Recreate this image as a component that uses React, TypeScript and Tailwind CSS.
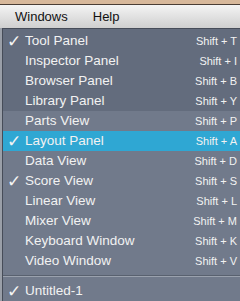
import React from "react";

const items: { label: string; key: string; checked?: boolean; active?: boolean }[] = [
  { label: "Tool Panel", key: "Shift + T", checked: true },
  { label: "Inspector Panel", key: "Shift + I" },
  { label: "Browser Panel", key: "Shift + B" },
  { label: "Library Panel", key: "Shift + Y" },
  { label: "Parts View", key: "Shift + P" },
  { label: "Layout Panel", key: "Shift + A", checked: true, active: true },
  { label: "Data View", key: "Shift + D" },
  { label: "Score View", key: "Shift + S", checked: true },
  { label: "Linear View", key: "Shift + L" },
  { label: "Mixer View", key: "Shift + M" },
  { label: "Keyboard Window", key: "Shift + K" },
  { label: "Video Window", key: "Shift + V" },
];

function Row({ label, shortcut, checked, active }: { label: string; shortcut?: string; checked?: boolean; active?: boolean }) {
  return (
    <div className={`h-[20px] flex items-center pr-[3px] ${active ? "bg-[#2fa7d3]" : ""}`}>
      <span className="w-[22px] pl-[4px] text-[17px] leading-none text-[#f4f4f4]">{checked ? "✓" : ""}</span>
      <span className="flex-1 text-[13.5px] text-[#f2f2f2] leading-none">{label}</span>
      {shortcut && <span className="text-[11px] text-[#f2f2f2] leading-none">{shortcut}</span>}
    </div>
  );
}

export default function App() {
  return (
    <div className="w-[240px] h-[301px] overflow-hidden flex flex-col font-['Liberation_Sans',Arial,sans-serif]">
      <div className="h-[4px] bg-[#d7b89b]" />
      <div className="h-px bg-[#4a3d35]" />
      <div className="h-[25px] bg-gradient-to-b from-[#f4f4f4] to-[#cfcfcf] flex items-center text-[13px] text-[#111]">
        <span className="ml-[15px]">Windows</span>
        <span className="ml-[25px]">Help</span>
      </div>
      <div className="flex-1 flex">
        <div className="w-[2px] bg-[#9a9fa8]" />
        <div className="flex-1 border-l border-t border-[#464c58] bg-[#717a8b] flex flex-col">
          <div className="bg-[#636c7d] pt-[2px]">
            {items.slice(0, 4).map((it) => (
              <Row key={it.label} label={it.label} shortcut={it.key} checked={it.checked} active={it.active} />
            ))}
          </div>
          {items.slice(4).map((it) => (
            <Row key={it.label} label={it.label} shortcut={it.key} checked={it.checked} active={it.active} />
          ))}
          <div className="h-[10px] flex flex-col justify-center">
            <div className="h-px bg-[#59616f]" />
            <div className="h-px bg-[#9aa1ad]" />
          </div>
          <Row label="Untitled-1" checked />
        </div>
      </div>
    </div>
  );
}
